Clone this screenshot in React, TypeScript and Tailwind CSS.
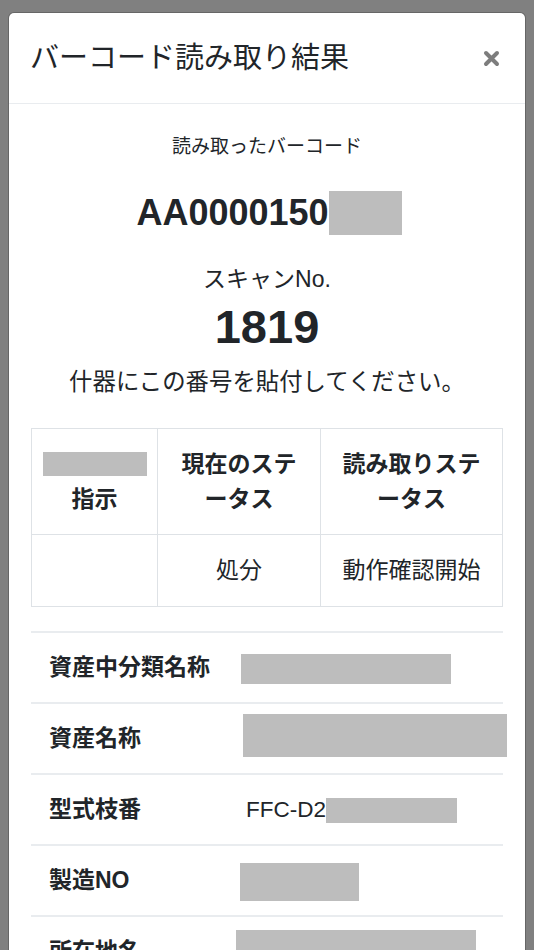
import React from "react";

const FONT = {
  fontFamily: '"Liberation Sans", "Noto Sans CJK JP", sans-serif',
};

function Redact({ className }: { className: string }) {
  return <div className={`bg-[#bdbdbd] shrink-0 ${className}`} />;
}

export default function App() {
  return (
    <div
      className="w-[534px] h-[950px] overflow-hidden bg-[#808080] text-[#212529]"
      style={FONT}
    >
      <div className="mx-[8px] mt-[12px] bg-white rounded-[6px] border border-black/20 bg-clip-padding">
        {/* header */}
        <div className="h-[91px] flex items-center justify-between pl-[21px] pr-[25px] border-b border-[#e9ecef]">
          <h5 className="text-[29px] leading-[43px] font-normal">バーコード読み取り結果</h5>
          <svg width="17" height="17" viewBox="0 0 17 17" aria-label="close">
            <path
              d="M3 3 L14 14 M14 3 L3 14"
              stroke="#7d7d7d"
              strokeWidth="4"
              strokeLinecap="round"
            />
          </svg>
        </div>

        {/* body */}
        <div className="px-[22px] pt-[29px] pb-[40px]">
          <p className="text-center text-[19px] leading-[28px]">読み取ったバーコード</p>

          <div className="mt-[30px] h-[44px] flex justify-center items-center">
            <span className="text-[36px] leading-[44px] font-bold pl-[4px]">AA0000150</span>
            <Redact className="w-[73px] h-[44px]" />
          </div>

          <p className="mt-[28px] text-center text-[23px] leading-[32px]">スキャンNo.</p>
          <p className="mt-[6px] text-center text-[47px] leading-[52px] font-bold">1819</p>
          <p className="mt-[12px] text-center text-[23.4px] leading-[34px]">
            什器にこの番号を貼付してください。
          </p>

          {/* table */}
          <div className="mt-[29px] w-[472px] grid grid-cols-[126px_163px_182px] border-t border-l border-[#dee2e6] text-[23px] leading-[35px]">
            <div className="h-[106px] border-r border-b border-[#dee2e6] flex flex-col items-center justify-center font-bold">
              <div className="h-[35px] flex items-center">
                <Redact className="w-[104px] h-[24px]" />
              </div>
              <div>指示</div>
            </div>
            <div className="h-[106px] border-r border-b border-[#dee2e6] flex flex-col items-center justify-center font-bold text-center">
              <div>現在のステ</div>
              <div>ータス</div>
            </div>
            <div className="h-[106px] border-r border-b border-[#dee2e6] flex flex-col items-center justify-center font-bold text-center">
              <div>読み取りステ</div>
              <div>ータス</div>
            </div>
            <div className="h-[72px] border-r border-b border-[#dee2e6]" />
            <div className="h-[72px] border-r border-b border-[#dee2e6] flex items-center justify-center">
              処分
            </div>
            <div className="h-[72px] border-r border-b border-[#dee2e6] flex items-center justify-center">
              動作確認開始
            </div>
          </div>

          {/* detail list */}
          <div className="mt-[24px] w-[472px]">
            <div className="h-[71px] border-t-2 border-[#e9ecef] flex items-center">
              <div className="w-[209px] shrink-0 pl-[18px] text-[23px] font-bold">資産中分類名称</div>
              <Redact className="w-[210px] h-[30px] ml-[1px] mt-[3px]" />
            </div>
            <div className="h-[71px] border-t-2 border-[#e9ecef] flex items-center">
              <div className="w-[209px] shrink-0 pl-[18px] text-[23px] font-bold">資産名称</div>
              <Redact className="w-[264px] h-[43px] ml-[3px] mb-[6px]" />
            </div>
            <div className="h-[71px] border-t-2 border-[#e9ecef] flex items-center">
              <div className="w-[209px] shrink-0 pl-[18px] text-[23px] font-bold">型式枝番</div>
              <span className="ml-[6px] text-[22.5px] leading-[25px]">FFC-D2</span>
              <Redact className="w-[131px] h-[25px] mt-[1px]" />
            </div>
            <div className="h-[71px] border-t-2 border-[#e9ecef] flex items-center">
              <div className="w-[209px] shrink-0 pl-[18px] text-[23px] font-bold">製造NO</div>
              <Redact className="w-[119px] h-[38px] mt-[2px]" />
            </div>
            <div className="h-[71px] border-t-2 border-[#e9ecef] flex items-center">
              <div className="w-[209px] shrink-0 pl-[18px] text-[23px] font-bold">所在地名</div>
              <Redact className="w-[240px] h-[44px] -ml-[4px]" />
            </div>
          </div>
        </div>
      </div>
    </div>
  );
}
